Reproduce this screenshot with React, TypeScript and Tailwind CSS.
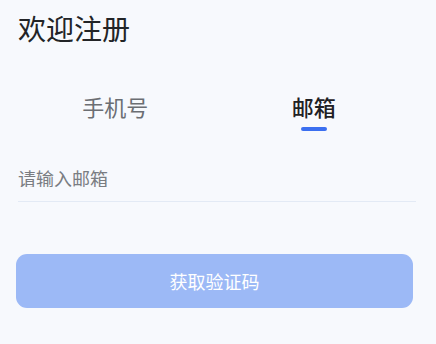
import { useState } from "react";

const tabs = ["手机号", "邮箱"];

export default function App() {
  const [active, setActive] = useState(1);
  const [email, setEmail] = useState("");

  return (
    <div
      className="min-h-[344px] w-full bg-[#f7f9fd] pl-4 pr-[23px] pt-[14px]"
      style={{ fontFamily: '"Noto Sans CJK SC", "Noto Sans", sans-serif' }}
    >
      <h1 className="ml-[2px] text-[28px] font-normal leading-none text-[#222427]">欢迎注册</h1>

      <div className="mt-[53px] grid grid-cols-2">
        {tabs.map((label, i) => (
          <button
            key={label}
            onClick={() => setActive(i)}
            className="flex flex-col items-center"
          >
            <span
              className={
                i === active
                  ? "text-[22px] font-medium leading-none text-[#1f2124]"
                  : "text-[22px] leading-none text-[#6b6e73]"
              }
            >
              {label}
            </span>
            <span
              className={
                i === active
                  ? "mt-[10px] h-1 w-[26px] rounded-full bg-[#3b6ff0]"
                  : "mt-[10px] h-1 w-[26px] rounded-full bg-transparent"
              }
            />
          </button>
        ))}
      </div>

      <div className="ml-[2px] mr-[-3px] mt-[38px] border-b border-[#e3eaf5] pb-[14px]">
        <input
          value={email}
          onChange={(event) => setEmail(event.target.value)}
          placeholder={active === 1 ? "请输入邮箱" : "请输入手机号"}
          className="block h-[18px] w-full bg-transparent text-[18px] leading-none text-[#222] outline-none placeholder:text-[#7a7d82]"
        />
      </div>

      <button className="mt-[52px] flex h-[54px] w-full items-center justify-center rounded-[11px] bg-[#9cb9f6] text-[18px] text-white">
        获取验证码
      </button>
    </div>
  );
}
